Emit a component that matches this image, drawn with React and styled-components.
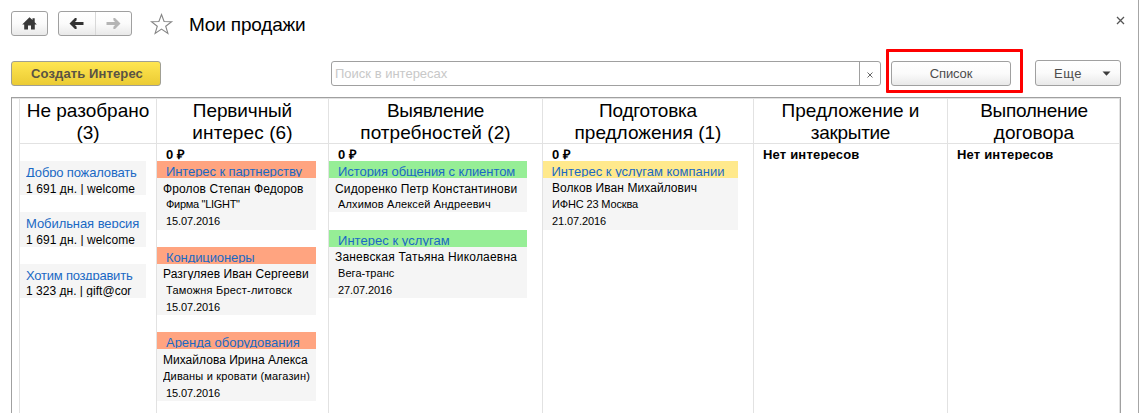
import React from "react";
import styled, { createGlobalStyle } from "styled-components";

const Global = createGlobalStyle`
  * { box-sizing: border-box; }
  body { margin: 0; background: #fff; overflow: hidden; }
`;

const Window = styled.div`
  width: 1139px;
  height: 413px;
  border-right: 1px solid #a6a6a6;
  padding: 11px 17px 0 11px;
  overflow: hidden;
  display: flex;
  flex-direction: column;
  font-family: "Liberation Sans", Arial, sans-serif;
  font-size: 13px;
  color: #000;
  background: #fff;
  white-space: nowrap;
`;

const TopBar = styled.header`
  display: flex;
  height: 25px;
  flex: none;
`;

const buttonFace = `
  border: 1px solid #a0a0a0;
  border-radius: 3px;
  background: linear-gradient(#ffffff 0%, #fbfbfb 50%, #e9e9e9 100%);
  padding: 0;
  font: inherit;
`;

const HomeButton = styled.button`
  ${buttonFace}
  width: 37px;
  height: 25px;
  margin-right: 10px;
  display: flex;
  align-items: center;
  justify-content: center;
`;

const NavGroup = styled.div`
  ${buttonFace}
  width: 74px;
  height: 25px;
  display: flex;
`;

const NavButton = styled.button`
  flex: 1;
  border: 0;
  padding: 0;
  background: none;
  display: flex;
  align-items: center;
  justify-content: center;
  & + & { border-left: 1px solid #d8d8d8; }
`;

const StarButton = styled.button`
  border: 0;
  padding: 0;
  background: none;
  width: 24px;
  height: 24px;
  margin: 1px 0 0 18px;
`;

const Title = styled.h1`
  margin: 0 0 0 15px;
  font-size: 19px;
  font-weight: 400;
  line-height: 27px;
  letter-spacing: -0.18px;
`;

const CloseButton = styled.button`
  border: 0;
  padding: 0;
  background: none;
  width: 9px;
  height: 9px;
  margin: 5px -4px 0 auto;
  svg { display: block; }
`;

const Toolbar = styled.div`
  display: flex;
  align-items: flex-end;
  height: 26px;
  margin-top: 24px;
  flex: none;
`;

const CreateButton = styled.button`
  width: 150px;
  height: 25px;
  border: 1px solid #a09f93;
  border-radius: 3px;
  background: linear-gradient(#ffe651, #ebcb34);
  padding: 0 0 0 2px;
  font: 700 13px/23px "Liberation Sans", Arial, sans-serif;
  letter-spacing: 0.12px;
  color: #5a5344;
`;

const Search = styled.div`
  display: flex;
  width: 550px;
  height: 25px;
  margin-left: 170px;
  border: 1px solid #a0a0a0;
  border-radius: 3px;
  background: #fff;
`;

const Placeholder = styled.span`
  flex: 1;
  padding-left: 3px;
  line-height: 24px;
  color: #c8c8c8;
`;

const ClearButton = styled.button`
  width: 21px;
  border: 0;
  border-left: 1px solid #a0a0a0;
  padding: 2px 0 0;
  background: none;
  display: flex;
  align-items: center;
  justify-content: center;
`;

const ListSlot = styled.div`
  position: relative;
  width: 120px;
  height: 25px;
  margin-left: 10px;
`;

const Highlight = styled.div`
  position: absolute;
  left: -5px;
  top: -12px;
  width: 137px;
  height: 44px;
  border: 3px solid #fe0000;
  border-radius: 1px;
  pointer-events: none;
`;

const ListButton = styled.button`
  ${buttonFace}
  width: 100%;
  height: 100%;
  line-height: 23px;
  letter-spacing: -0.15px;
  color: #4d4d4d;
`;

const MoreButton = styled.button`
  ${buttonFace}
  width: 86px;
  height: 26px;
  margin-left: 24px;
  padding: 0 9px 0 18px;
  display: flex;
  align-items: center;
  justify-content: space-between;
  letter-spacing: 0.5px;
  color: #4d4d4d;
`;

const Board = styled.main`
  flex: none;
  width: 1110px;
  height: 330px;
  margin-top: 11px;
  border: 1px solid #a0a0a0;
  border-bottom: 0;
  display: grid;
  grid-template-columns: 137px 172px 214px 211px 194px 173px;
  padding-left: 7px;
  overflow: hidden;
  box-shadow: inset 0 1px #e2e2e2, inset -1px 0 #e2e2e2;
`;

const Column = styled.section`
  border-left: 1px solid #e2e2e2;
  padding-top: 1px;
`;

const ColumnTitle = styled.h2`
  margin: 0;
  height: 45px;
  padding-top: 1px;
  border-bottom: 1px solid #e2e2e2;
  font-size: 19px;
  font-weight: 400;
  line-height: 22px;
  text-align: center;
  span { display: block; }
`;

const HeadLine = styled.span`
  letter-spacing: ${(p) => p.$ls || 0}px;
`;

const Summary = styled.div`
  height: 17px;
  padding: 3px 0 0 9px;
  font-weight: 700;
  div {
    height: 13px;
    line-height: 15px;
    overflow: hidden;
    letter-spacing: ${(p) => (p.$empty ? 0.19 : -0.5)}px;
    word-spacing: ${(p) => (p.$empty ? 0 : 1)}px;
  }
`;

const Cards = styled.div`
  display: flex;
  flex-direction: column;
  gap: 17.13px;
  width: ${(p) => p.$w}px;
`;

const Card = styled.article`
  background: #f5f5f5;
`;

const Row = styled.div`
  height: 17.13px;
  padding: ${(p) => p.$top}px 0 0 ${(p) => p.$left}px;
  background: ${(p) => p.$bg || "transparent"};
`;

const RowText = styled.div`
  height: ${(p) => p.$clip}px;
  overflow: hidden;
  font-size: ${(p) => p.$size}px;
  line-height: ${(p) => p.$lh}px;
  letter-spacing: ${(p) => p.$ls || 0}px;
  color: ${(p) => p.$color || "#000"};
`;

const LinkRow = ({ text, ls, bg, left, low }) => (
  <Row $top={low ? 4 : 3} $left={left} $bg={bg}>
    <RowText $clip={low ? 12 : 13} $size={13} $lh={15} $ls={ls} $color="#1a69c4">{text}</RowText>
  </Row>
);

const NameRow = ({ text, ls, left, up = 0 }) => (
  <Row $top={3.6 - up} $left={left}>
    <RowText $clip={13} $size={12} $lh={15} $ls={ls}>{text}</RowText>
  </Row>
);

const SmallRow = ({ text, ls, left, down = 0 }) => (
  <Row $top={1 + down} $left={left}>
    <RowText $clip={16 - down} $size={11} $lh={17} $ls={ls}>{text}</RowText>
  </Row>
);

const ORANGE = "#ffa480";
const GREEN = "#96ee96";
const YELLOW = "#ffe98c";

const columns = [
  {
    title: [["Не разобрано", 0], ["(3)", 0]],
    width: 126,
    low: true,
    linkLeft: 6,
    nameLeft: 6,
    cards: [
      { link: ["Добро пожаловать", -0.15], name: ["1 691 дн. | welcome", 0.08] },
      { link: ["Мобильная версия", -0.07], name: ["1 691 дн. | welcome", 0.08] },
      { link: ["Хотим поздравить", -0.22], name: ["1 323 дн. | gift@cor", 0.02] },
    ],
  },
  {
    title: [["Первичный", -0.1], ["интерес (6)", 0.09]],
    sum: "0 ₽",
    width: 159,
    linkLeft: 9,
    nameLeft: 6,
    color: ORANGE,
    cards: [
      { link: ["Интерес к партнерству", -0.09], name: ["Фролов Степан Федоров", 0.1], company: ['Фирма "LIGHT"', -0.3], date: "15.07.2016" },
      { link: ["Кондиционеры", -0.1], name: ["Разгуляев Иван Сергееви", 0.09], company: ["Таможня Брест-литовск", 0.21], date: "15.07.2016" },
      { link: ["Аренда оборудования", -0.02], name: ["Михайлова Ирина Алекса", 0.02], company: ["Диваны и кровати (магазин)", 0.17], wide: true, date: "15.07.2016" },
    ],
  },
  {
    title: [["Выявление", -0.27], ["потребностей (2)", 0.04]],
    sum: "0 ₽",
    width: 198,
    linkLeft: 9,
    nameLeft: 6,
    color: GREEN,
    cards: [
      { link: ["История общения с клиентом", -0.06], name: ["Сидоренко Петр Константинови", 0.14], company: ["Алхимов Алексей Андреевич", 0.13] },
      { link: ["Интерес к услугам", 0.04], name: ["Заневская Татьяна Николаевна", 0.19], company: ["Вега-транс", 0.05], date: "27.07.2016" },
    ],
  },
  {
    title: [["Подготовка", -0.2], ["предложения (1)", 0]],
    sum: "0 ₽",
    width: 195,
    linkLeft: 8.5,
    nameLeft: 9,
    nameUp: 0.6,
    color: YELLOW,
    cards: [
      { link: ["Интерес к услугам компании", 0.02], name: ["Волков Иван Михайлович", 0.06], company: ["ИФНС 23 Москва", -0.15], date: "21.07.2016" },
    ],
  },
  { title: [["Предложение и", 0], ["закрытие", -0.3]], cards: [] },
  { title: [["Выполнение", -0.3], ["договора", 0]], cards: [] },
];

const BoardColumn = ({ col }) => (
  <Column>
    <ColumnTitle>
      {col.title.map(([t, ls]) => <HeadLine key={t} $ls={ls}>{t}</HeadLine>)}
    </ColumnTitle>
    <Summary $empty={!col.cards.length}>
      <div>{col.cards.length ? col.sum : "Нет интересов"}</div>
    </Summary>
    <Cards $w={col.width}>
      {col.cards.map((c, i) => (
        <Card key={i}>
          <LinkRow text={c.link[0]} ls={c.link[1]} bg={col.color} left={col.linkLeft} low={col.low} />
          <NameRow text={c.name[0]} ls={c.name[1]} left={col.nameLeft} up={col.nameUp} />
          {c.company && (
            <SmallRow text={c.company[0]} ls={c.company[1]} left={c.wide ? 6 : 9} down={c.wide ? 0.5 : 0} />
          )}
          {c.date && <SmallRow text={c.date} ls={-0.1} left={9} />}
        </Card>
      ))}
    </Cards>
  </Column>
);

const Arrow = ({ color, flip }) => (
  <svg width="15" height="13" viewBox="0 0 15 13">
    <g transform={flip ? "translate(15 0) scale(-1 1)" : undefined}>
      <path d="M3 6.5H14.5" stroke={color} strokeWidth="3" fill="none" />
      <path d="M0.5 6.5L6 1H7.6V3.2L4.6 6.5L7.6 9.8V12H6Z" fill={color} />
    </g>
  </svg>
);

export default function App() {
  return (
    <Window>
      <Global />
      <TopBar>
        <HomeButton aria-label="Домой">
          <svg width="15" height="13" viewBox="0 0 15 13">
            <path d="M7.5 0.3L0.2 7.4H2.2V12.4H6V8.6H9V12.4H12.8V7.4H14.8L12.7 5.2V1.2H10.5V3.1Z" fill="#383838" />
          </svg>
        </HomeButton>
        <NavGroup>
          <NavButton aria-label="Назад"><Arrow color="#333" /></NavButton>
          <NavButton aria-label="Вперед"><Arrow color="#b5b5b5" flip /></NavButton>
        </NavGroup>
        <StarButton aria-label="В избранное">
          <svg width="24" height="24" viewBox="0 0 24 24">
            <path d="M11.5 2.5L14.1 9.5L21.6 9.7L15.7 14.2L17.9 21.4L11.5 17.1L5.1 21.4L7.3 14.2L1.4 9.7L8.9 9.5Z" fill="#fff" stroke="#858585" strokeWidth="1.1" />
          </svg>
        </StarButton>
        <Title>Мои продажи</Title>
        <CloseButton aria-label="Закрыть">
          <svg width="9" height="9" viewBox="0 0 9 9">
            <path d="M1 1L8 8M8 1L1 8" stroke="#555" strokeWidth="1.3" />
          </svg>
        </CloseButton>
      </TopBar>
      <Toolbar>
        <CreateButton>Создать Интерес</CreateButton>
        <Search>
          <Placeholder>Поиск в интересах</Placeholder>
          <ClearButton aria-label="Очистить">
            <svg width="6" height="6" viewBox="0 0 6 6">
              <path d="M0.5 0.5L5.5 5.5M5.5 0.5L0.5 5.5" stroke="#666" strokeWidth="1" />
            </svg>
          </ClearButton>
        </Search>
        <ListSlot>
          <ListButton>Список</ListButton>
          <Highlight />
        </ListSlot>
        <MoreButton>
          Еще
          <svg width="9" height="5" viewBox="0 0 9 5"><path d="M0.5 0.5H8.5L4.5 4.7Z" fill="#3c3c3c" /></svg>
        </MoreButton>
      </Toolbar>
      <Board>
        {columns.map((col, i) => <BoardColumn key={i} col={col} />)}
      </Board>
    </Window>
  );
}
